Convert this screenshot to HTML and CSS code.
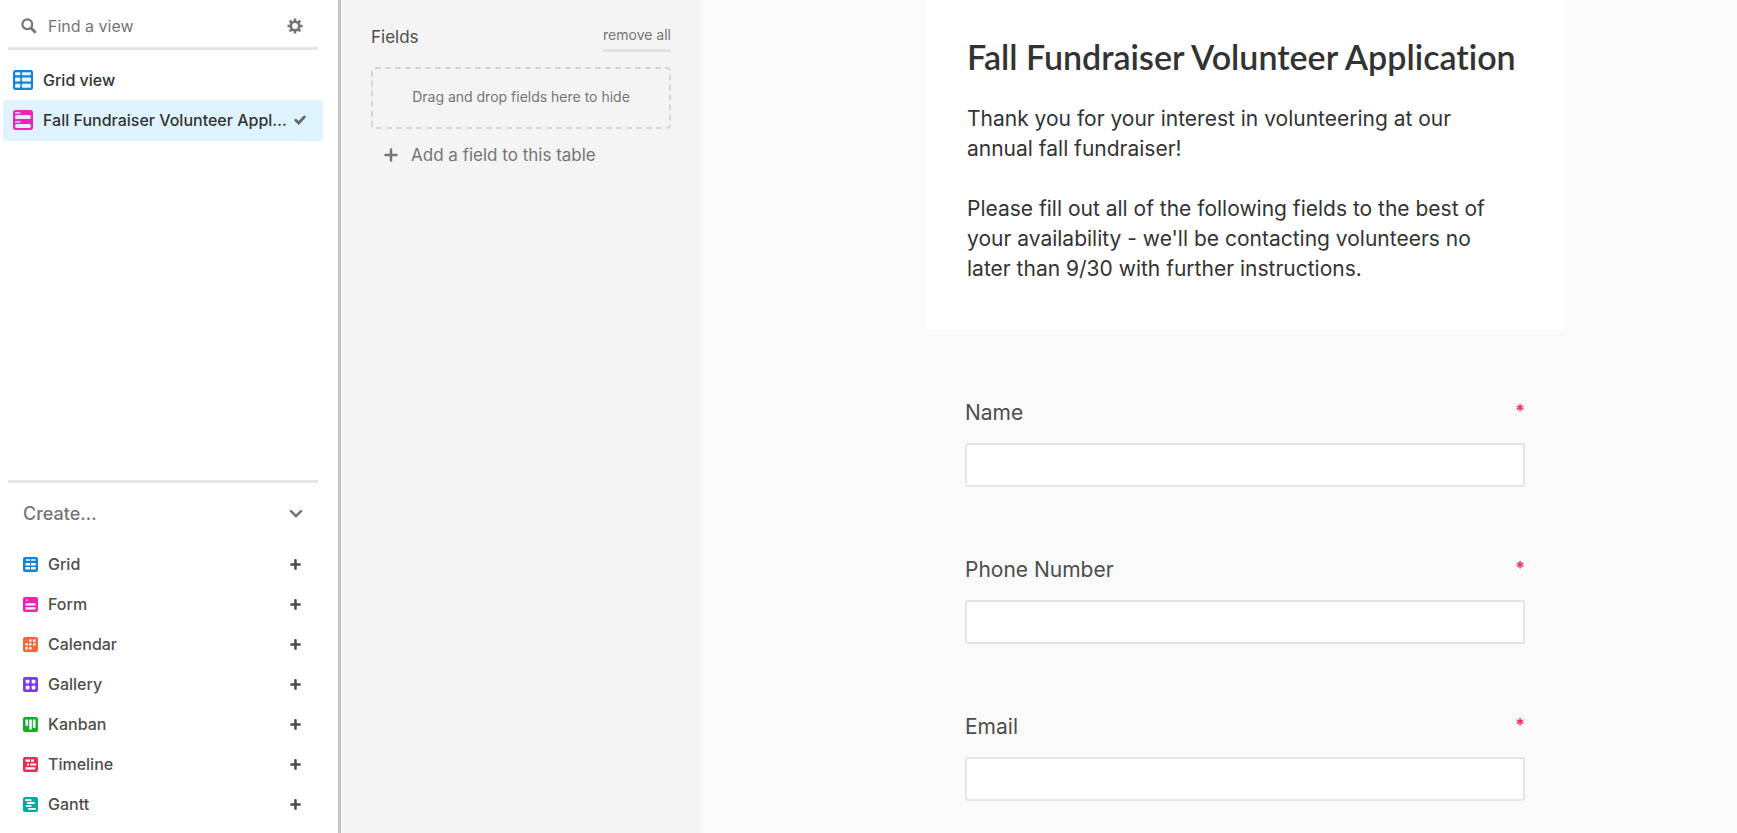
FILE: index.html
```html
<!DOCTYPE html>
<html lang="en">
<head>
<meta charset="utf-8">
<meta name="viewport" content="width=device-width, initial-scale=1">
<title>Fall Fundraiser Volunteer Application</title>
<link rel="stylesheet" href="styles.css">
</head>
<body>
<svg class="defs" aria-hidden="true">
  <symbol id="plus" viewBox="0 0 12 12"><path d="M6 1.500v9M1.500 6h9" fill="none" stroke="currentColor" stroke-width="2.800" stroke-linecap="round"/></symbol>
</svg>
<div class="app">
  <aside class="sidebar">
    <div class="search">
      <svg class="search-icon" viewBox="0 0 16 16" aria-hidden="true"><circle cx="6.3" cy="6.3" r="4.900" fill="none" stroke="currentColor" stroke-width="2.200"/><path d="M10.200 10.200l3.600 3.600" stroke="currentColor" stroke-width="3" stroke-linecap="round"/></svg>
      <input class="search-input" type="text" placeholder="Find a view" aria-label="Find a view">
      <button class="icon-button" type="button" aria-label="View settings">
        <svg class="gear" viewBox="0 0 16 16" aria-hidden="true"><g fill="none" stroke="currentColor"><circle cx="8" cy="8" r="4.200" stroke-width="2.600"/><path d="M8 .5v3M8 12.500v3M.5 8h3M12.500 8h3M2.700 2.700l2.100 2.100M11.200 11.200l2.100 2.100M2.700 13.300l2.100-2.100M11.200 4.800l2.100-2.100" stroke-width="2.600"/></g></svg>
      </button>
    </div>
    <nav class="views" aria-label="Views">
      <a class="view" href="#grid">
        <svg class="view-icon" viewBox="0 0 20 20" aria-hidden="true"><rect width="20" height="20" rx="2.500" fill="#1283da"/><g fill="#e8f5ff"><rect x="2" y="2.300" width="5.300" height="3" rx="1"/><rect x="8.800" y="2.300" width="9.200" height="3" rx="1"/><rect x="2" y="7.600" width="5.300" height="3.900" rx="1"/><rect x="8.800" y="7.600" width="9.200" height="3.900" rx="1"/><rect x="2" y="13.800" width="5.300" height="3.900" rx="1"/><rect x="8.800" y="13.800" width="9.200" height="3.900" rx="1"/></g></svg>
        <span class="view-name">Grid view</span>
      </a>
      <a class="view view-active" href="#form" aria-current="page">
        <svg class="view-icon" viewBox="0 0 20 20" aria-hidden="true"><rect width="20" height="20" rx="2.500" fill="#ed23b7"/><g fill="#e0f0ff"><rect x="2" y="2.200" width="5.500" height="1.300" rx=".6"/><rect x="2" y="5" width="15.900" height="4" rx="1.600"/><rect x="2" y="11.200" width="5.500" height="1.300" rx=".6"/><rect x="2" y="14" width="15.900" height="3.900" rx="1.600"/></g></svg>
        <span class="view-name">Fall Fundraiser Volunteer Application</span>
        <svg class="check" viewBox="0 0 12 10" aria-hidden="true"><path d="M1.800 5.300l2.800 2.700 5.700-6" fill="none" stroke="currentColor" stroke-width="2.800" stroke-linecap="round"/></svg>
      </a>
    </nav>
    <section class="create">
      <button class="create-head" type="button" aria-expanded="true">
        <span>Create...</span>
        <svg class="chevron" viewBox="0 0 14 10" aria-hidden="true"><path d="M2 2.200l5 5 5-5" fill="none" stroke="currentColor" stroke-width="2.500" stroke-linecap="round"/></svg>
      </button>
      <button class="create-item" type="button">
        <svg class="type-icon" viewBox="0 0 15 15" aria-hidden="true"><rect width="15" height="15" rx="2" fill="#1283da"/><path d="M3 2.300h4v1.500H3zM8 2.300h4.500v1.500H8zM2.500 6H7v2.500H2.500zM8 6h4.700v2.500H8zM2.500 10H7v2.500H2.500zM8 10h4.700v2.500H8z" fill="#fff"/></svg>
        <span class="create-name">Grid</span><svg class="plus" aria-hidden="true"><use href="#plus"/></svg>
      </button>
      <button class="create-item" type="button">
        <svg class="type-icon" viewBox="0 0 15 15" aria-hidden="true"><rect width="15" height="15" rx="2" fill="#ed23b7"/><path d="M3 2.500h2v1.300H3zM2.600 6.200h9.900v2.300H2.600zM2.600 10.200h9.900v2.300H2.600z" fill="#fff"/></svg>
        <span class="create-name">Form</span><svg class="plus" aria-hidden="true"><use href="#plus"/></svg>
      </button>
      <button class="create-item" type="button">
        <svg class="type-icon" viewBox="0 0 15 15" aria-hidden="true"><rect width="15" height="15" rx="2" fill="#f7653b"/><path d="M6.200 2.500h2.300v2.300H6.200zM10 2.500h2.500v2.300H10zM2.500 6.300h2.300v2.300H2.500zM6.200 6.300h2.300v2.300H6.200zM10 6.300h2.500v2.300H10zM2.500 10.100h2.300v2.300H2.500zM6.200 10.100h2.300v2.300H6.200z" fill="#fff"/></svg>
        <span class="create-name">Calendar</span><svg class="plus" aria-hidden="true"><use href="#plus"/></svg>
      </button>
      <button class="create-item" type="button">
        <svg class="type-icon" viewBox="0 0 15 15" aria-hidden="true"><rect width="15" height="15" rx="2" fill="#7c39ed"/><g fill="#fff"><rect x="2.700" y="2.700" width="3.700" height="3.700" rx=".8"/><rect x="8.700" y="2.700" width="3.700" height="3.700" rx=".8"/><rect x="2.700" y="8.700" width="3.700" height="3.700" rx=".8"/><rect x="8.700" y="8.700" width="3.700" height="3.700" rx=".8"/></g></svg>
        <span class="create-name">Gallery</span><svg class="plus" aria-hidden="true"><use href="#plus"/></svg>
      </button>
      <button class="create-item" type="button">
        <svg class="type-icon" viewBox="0 0 15 15" aria-hidden="true"><rect width="15" height="15" rx="2" fill="#11af22"/><g fill="#fff"><rect x="2.500" y="2.400" width="2.600" height="6.400" rx=".6"/><rect x="6.200" y="2.400" width="2.600" height="10.200" rx=".6"/><rect x="9.900" y="2.400" width="2.600" height="8.400" rx=".6"/></g></svg>
        <span class="create-name">Kanban</span><svg class="plus" aria-hidden="true"><use href="#plus"/></svg>
      </button>
      <button class="create-item" type="button">
        <svg class="type-icon" viewBox="0 0 15 15" aria-hidden="true"><rect width="15" height="15" rx="2" fill="#e52e4d"/><path d="M2.500 2.500H7v2.200H2.500zM8 2.500h3v2.200H8zM4 6.400h2v2.200H4zM7.300 6.400h6v2.200h-6zM2.500 10.300h9.700v2.200H2.500z" fill="#fff"/></svg>
        <span class="create-name">Timeline</span><svg class="plus" aria-hidden="true"><use href="#plus"/></svg>
      </button>
      <button class="create-item" type="button">
        <svg class="type-icon" viewBox="0 0 15 15" aria-hidden="true"><rect width="15" height="15" rx="2" fill="#06a8a4"/><path d="M2.900 3.100h5M4.800 6h6.200M3.700 9h4M5.800 11.900h6.400" fill="none" stroke="#fff" stroke-width="1.800" stroke-linecap="round"/></svg>
        <span class="create-name">Gantt</span><svg class="plus" aria-hidden="true"><use href="#plus"/></svg>
      </button>
    </section>
  </aside>

  <section class="fields">
    <div class="fields-head">
      <h2 class="fields-title">Fields</h2>
      <button class="remove-all" type="button">remove all</button>
    </div>
    <div class="dropzone">Drag and drop fields here to hide</div>
    <button class="add-field" type="button"><svg class="add-plus" viewBox="0 0 14 14" aria-hidden="true"><path d="M7 1.500v11M1.500 7h11" fill="none" stroke="currentColor" stroke-width="2.400" stroke-linecap="round"/></svg>Add a field to this table</button>
  </section>

  <main class="main">
    <form class="form">
      <header class="card">
        <h1 class="title">Fall Fundraiser Volunteer Application</h1>
        <p class="text">Thank you for your interest in volunteering at our annual fall fundraiser!</p>
        <p class="text">Please fill out all of the following fields to the best of your availability - we'll be contacting volunteers no later than 9/30 with further instructions.</p>
      </header>
      <div class="questions">
        <div class="question">
          <label class="label" for="name">Name <span class="required">*</span></label>
          <input class="input" id="name" type="text" required>
        </div>
        <div class="question">
          <label class="label" for="phone">Phone Number <span class="required">*</span></label>
          <input class="input" id="phone" type="tel" required>
        </div>
        <div class="question">
          <label class="label" for="email">Email <span class="required">*</span></label>
          <input class="input" id="email" type="email" required>
        </div>
      </div>
    </form>
  </main>
</div>
</body>
</html>
```

FILE: styles.css
```css
* {
  box-sizing: border-box;
}

body {
  margin: 0;
  font-family: Inter, "Liberation Sans", sans-serif;
  color: #333;
  background: #fafafa;
}

button,
input {
  font: inherit;
  color: inherit;
}

button {
  padding: 0;
  border: 0;
  background: none;
  text-align: left;
  cursor: pointer;
}

svg {
  display: block;
  flex: none;
}

.defs {
  position: absolute;
  width: 0;
  height: 0;
}

.app {
  display: flex;
  height: 100vh;
  overflow: hidden;
}

/* Views sidebar */
.sidebar {
  display: flex;
  flex-direction: column;
  flex: none;
  width: 341px;
  border-right: 3px solid #c4c4c4;
  background: #fff;
}

.search {
  display: flex;
  align-items: center;
  height: 50px;
  margin: 0 20px 0 8px;
  padding: 5px 15px 0 13px;
  border-bottom: 3px solid #e5e5e5;
  color: #757575;
}

.search-icon {
  width: 16px;
  height: 16px;
}

.search-input {
  flex: 1;
  min-width: 0;
  padding: 0 0 0 11px;
  border: 0;
  outline: 0;
  background: none;
  font-size: 16px;
}

.search-input::placeholder {
  color: #757575;
  opacity: 1;
}

.gear {
  width: 16px;
  height: 16px;
}

.views {
  display: flex;
  flex-direction: column;
  padding: 10px 15px 0 3px;
}

.view {
  display: flex;
  align-items: center;
  height: 40px;
  padding: 0 17px 0 10px;
  border-radius: 4px;
  color: #333;
  font-size: 16px;
  font-weight: 500;
  text-decoration: none;
}

.view-active {
  height: 41px;
  padding-bottom: 1px;
  background: #def3fe;
}

.view-icon {
  width: 20px;
  height: 20px;
  margin-right: 10px;
}

.view-name {
  flex: 1;
  overflow: hidden;
  text-overflow: ellipsis;
  white-space: nowrap;
}

.check {
  width: 12px;
  height: 10px;
  margin-left: 4px;
  color: #666;
}

.create {
  margin: auto 20px 0 8px;
  padding: 0 15px 9px;
  border-top: 3px solid #e5e5e5;
}

.create-head {
  display: flex;
  align-items: center;
  justify-content: space-between;
  width: 100%;
  height: 61px;
  color: #757575;
  font-size: 18px;
  font-weight: 500;
}

.chevron {
  width: 14px;
  height: 10px;
}

.create-item {
  display: flex;
  align-items: center;
  width: 100%;
  height: 40px;
  padding-right: 2px;
  color: #4d4d4d;
  font-size: 16px;
  font-weight: 500;
}

.type-icon {
  width: 15px;
  height: 15px;
  margin-right: 10px;
}

.create-name {
  flex: 1;
}

.plus {
  width: 11px;
  height: 11px;
}

/* Fields panel */
.fields {
  flex: none;
  width: 360px;
  padding: 22px 30px;
  background: #f4f4f4;
  color: #757575;
}

.fields-head {
  display: flex;
  align-items: center;
  justify-content: space-between;
  height: 30px;
}

.fields-title {
  margin: 0;
  color: #4d4d4d;
  font-size: 17px;
  font-weight: 400;
}

.remove-all {
  height: 30px;
  padding-bottom: 2px;
  border-bottom: 3px solid #e2e2e2;
  font-size: 14px;
}

.dropzone {
  display: flex;
  align-items: center;
  justify-content: center;
  height: 62px;
  margin-top: 15px;
  padding-bottom: 3px;
  border: 2px dashed #d6d6d6;
  border-radius: 4px;
  font-size: 14px;
}

.add-field {
  display: flex;
  align-items: center;
  gap: 13px;
  height: 52px;
  padding-left: 13px;
  font-size: 17px;
}

.add-plus {
  width: 14px;
  height: 14px;
}

/* Form */
.main {
  flex: 1;
  min-width: 0;
  padding-left: 52px;
}

.form {
  max-width: 640px;
  margin: 0 auto;
}

.card {
  padding: 34px 42px 46px;
  border-radius: 0 0 6px 6px;
  background: #fff;
}

.title {
  margin: 0 0 24px;
  font-family: Lato, "Open Sans", sans-serif;
  font-size: 34px;
  font-variant-ligatures: none;
  font-weight: 600;
  line-height: 46px;
  white-space: nowrap;
}

.text {
  margin: 0 0 30px;
  padding-right: 16px;
  font-size: 21px;
  line-height: 30px;
}

.text:last-child {
  margin-bottom: 0;
}

.questions {
  display: grid;
  gap: 68px;
  padding: 68px 40px 0;
}

.question {
  display: grid;
  gap: 15px;
}

.label {
  display: flex;
  justify-content: space-between;
  color: #4d4d4d;
  font-size: 21px;
  line-height: 30px;
}

.required {
  color: #f82b60;
  font-size: 18px;
  font-weight: 600;
  line-height: 28px;
}

.input {
  width: 100%;
  height: 44px;
  padding: 0 10px;
  border: 2px solid #e5e5e5;
  border-radius: 3px;
  background: #fff;
  font-size: 20px;
}
```
